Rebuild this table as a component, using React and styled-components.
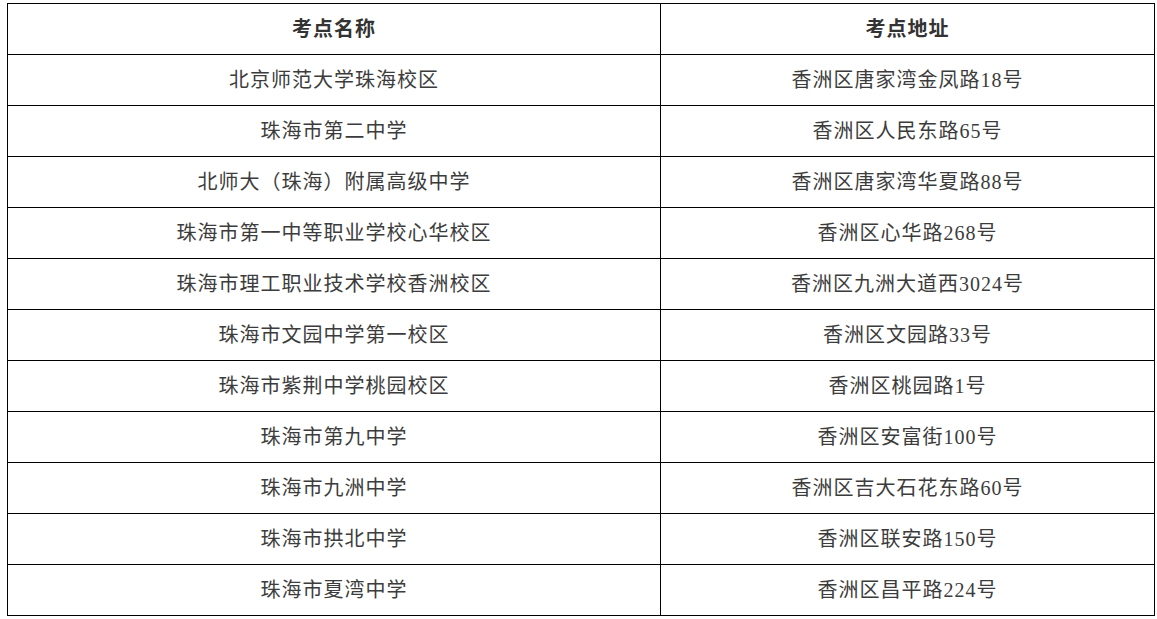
import React from "react";
import styled, { createGlobalStyle } from "styled-components";

const GlobalStyle = createGlobalStyle`
  html, body {
    margin: 0;
    padding: 0;
    background: #fff;
  }
  body {
    font-family: "Liberation Serif", "Noto Sans CJK SC", serif;
  }
`;

const sites = [
  ["北京师范大学珠海校区", "香洲区唐家湾金凤路18号"],
  ["珠海市第二中学", "香洲区人民东路65号"],
  ["北师大（珠海）附属高级中学", "香洲区唐家湾华夏路88号"],
  ["珠海市第一中等职业学校心华校区", "香洲区心华路268号"],
  ["珠海市理工职业技术学校香洲校区", "香洲区九洲大道西3024号"],
  ["珠海市文园中学第一校区", "香洲区文园路33号"],
  ["珠海市紫荆中学桃园校区", "香洲区桃园路1号"],
  ["珠海市第九中学", "香洲区安富街100号"],
  ["珠海市九洲中学", "香洲区吉大石花东路60号"],
  ["珠海市拱北中学", "香洲区联安路150号"],
  ["珠海市夏湾中学", "香洲区昌平路224号"],
];

const Page = styled.div`
  padding: 3px 0 0 7px;
`;

const Table = styled.table`
  border-collapse: collapse;
  width: 1146px;
  table-layout: fixed;
`;

const HeadCell = styled.th`
  border: 1px solid #000;
  height: 46px;
  padding: 0 0 4px;
  font-size: 20px;
  font-weight: bold;
  letter-spacing: 1px;
  color: #333;
  text-align: center;
  vertical-align: middle;
  width: ${(p) => p.$w}px;
`;

const Cell = styled.td`
  border: 1px solid #000;
  height: 46px;
  padding: 0 0 4px;
  font-size: 20px;
  letter-spacing: 1px;
  color: #3c3c3c;
  text-align: center;
  vertical-align: middle;
`;

const App = () => {
  return (
    <>
      <GlobalStyle />
      <Page>
        <Table>
          <thead>
            <tr>
              <HeadCell $w={652}>考点名称</HeadCell>
              <HeadCell $w={493}>考点地址</HeadCell>
            </tr>
          </thead>
          <tbody>
            {sites.map(([name, address]) => (
              <tr key={name}>
                <Cell>{name}</Cell>
                <Cell>{address}</Cell>
              </tr>
            ))}
          </tbody>
        </Table>
      </Page>
    </>
  );
};

export default App;
